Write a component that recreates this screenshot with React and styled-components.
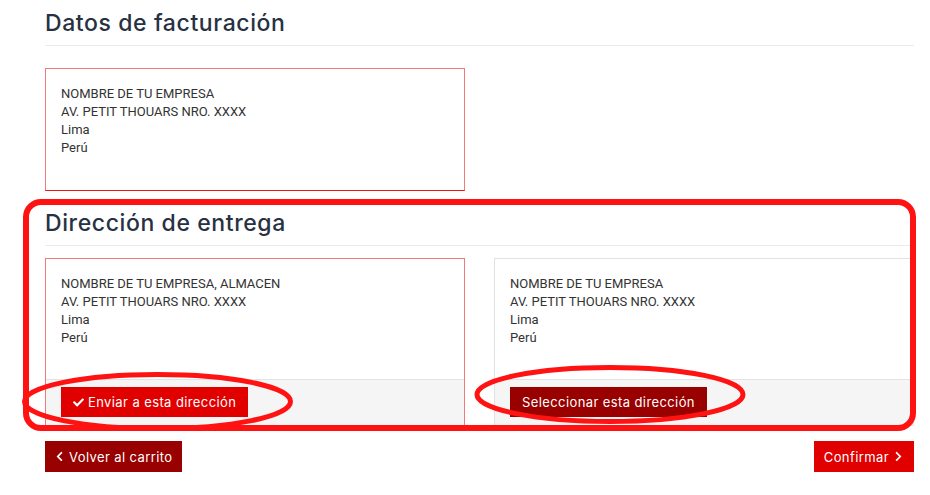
import React from 'react';
import styled, { createGlobalStyle } from 'styled-components';
import { FaCheck, FaChevronLeft, FaChevronRight } from 'react-icons/fa';

const GlobalStyle = createGlobalStyle`
  html, body {
    margin: 0;
    padding: 0;
    background: #ffffff;
  }
  body {
    font-family: Roboto, 'Liberation Sans', sans-serif;
    color: #333;
  }
`;

const Page = styled.div`
  position: relative;
  width: 930px;
  height: 495px;
  overflow: hidden;
  box-sizing: border-box;
  padding: 0 16px 0 45px;
`;

const Section = styled.section`
  display: flex;
  flex-direction: column;
  padding-top: ${(p) => p.$top}px;
`;

const Title = styled.h2`
  margin: 0;
  font-family: Inter, 'Open Sans', sans-serif;
  font-weight: 500;
  font-size: 23px;
  letter-spacing: 0.6px;
  line-height: 28px;
  color: #273142;
  padding-bottom: 8px;
  border-bottom: 1px solid #ebebeb;
  margin-bottom: ${(p) => p.$gap}px;
`;

const Cards = styled.div`
  display: grid;
  grid-template-columns: 420px 420px;
  column-gap: 29px;
`;

const Card = styled.div`
  display: flex;
  flex-direction: column;
  box-sizing: border-box;
  width: 420px;
  height: ${(p) => p.$height}px;
  border: 1px solid ${(p) => (p.$active ? '#f07a7a' : '#e2e2e2')};
  border-bottom-color: ${(p) => (p.$active ? '#e81818' : '#e2e2e2')};
  background: #fff;
`;

const Address = styled.div`
  flex: 1;
  padding: 16px 15px 12px;
  font-size: 13px;
  line-height: 18px;
  color: #333;
`;

const CardFooter = styled.div`
  background: #f5f5f5;
  border-top: 1px solid #e3e3e3;
  padding: 7px 15px 8px;
`;

const Button = styled.button`
  display: inline-flex;
  align-items: center;
  gap: 4px;
  border: none;
  border-radius: 0;
  height: ${(p) => p.$h || 30}px;
  padding: 0 ${(p) => p.$px || 12}px;
  font-family: Inter, 'Open Sans', sans-serif;
  font-size: 13px;
  font-weight: 400;
  letter-spacing: 0.4px;
  color: #fff;
  background: ${(p) => (p.$dark ? '#990000' : '#e00000')};
  cursor: pointer;

  svg {
    font-size: 11px;
  }
`;

const Actions = styled.div`
  display: flex;
  justify-content: space-between;
  margin-top: 15px;
`;

const Overlay = styled.svg`
  position: absolute;
  left: 0;
  top: 0;
  pointer-events: none;
`;

const billing = ['NOMBRE DE TU EMPRESA', 'AV. PETIT THOUARS NRO. XXXX', 'Lima', 'Perú'];

const addresses = [
  {
    id: 1,
    lines: ['NOMBRE DE TU EMPRESA, ALMACEN', 'AV. PETIT THOUARS NRO. XXXX', 'Lima', 'Perú'],
    active: true,
  },
  {
    id: 2,
    lines: ['NOMBRE DE TU EMPRESA', 'AV. PETIT THOUARS NRO. XXXX', 'Lima', 'Perú'],
    active: false,
  },
];

const Lines = ({ lines }) => (
  <Address>
    {lines.map((l) => (
      <div key={l}>{l}</div>
    ))}
  </Address>
);

const App = () => (
  <>
    <GlobalStyle />
    <Page>
      <Section $top={9}>
        <Title $gap={22}>Datos de facturación</Title>
        <Card $active $height={123}>
          <Lines lines={billing} />
        </Card>
      </Section>

      <Section $top={18}>
        <Title $gap={12}>Dirección de entrega</Title>
        <Cards>
          {addresses.map((a) => (
            <Card key={a.id} $active={a.active} $height={168}>
              <Lines lines={a.lines} />
              <CardFooter>
                {a.active ? (
                  <Button>
                    <FaCheck />
                    Enviar a esta dirección
                  </Button>
                ) : (
                  <Button $dark>Seleccionar esta dirección</Button>
                )}
              </CardFooter>
            </Card>
          ))}
        </Cards>
      </Section>

      <Actions>
        <Button $dark $h={31} $px={9}>
          <FaChevronLeft />
          Volver al carrito
        </Button>
        <Button $h={31} $px={10}>
          Confirmar
          <FaChevronRight />
        </Button>
      </Actions>

      <Overlay width="930" height="495" viewBox="0 0 930 495">
        <rect x="26" y="202" width="887" height="226" rx="15" fill="none" stroke="#ff1212" strokeWidth="6" />
        <ellipse cx="157.5" cy="401.5" rx="133" ry="27" fill="none" stroke="#ff1212" strokeWidth="5" />
        <ellipse cx="610" cy="394.5" rx="133" ry="27" fill="none" stroke="#ff1212" strokeWidth="5" />
      </Overlay>
    </Page>
  </>
);

export default App;
